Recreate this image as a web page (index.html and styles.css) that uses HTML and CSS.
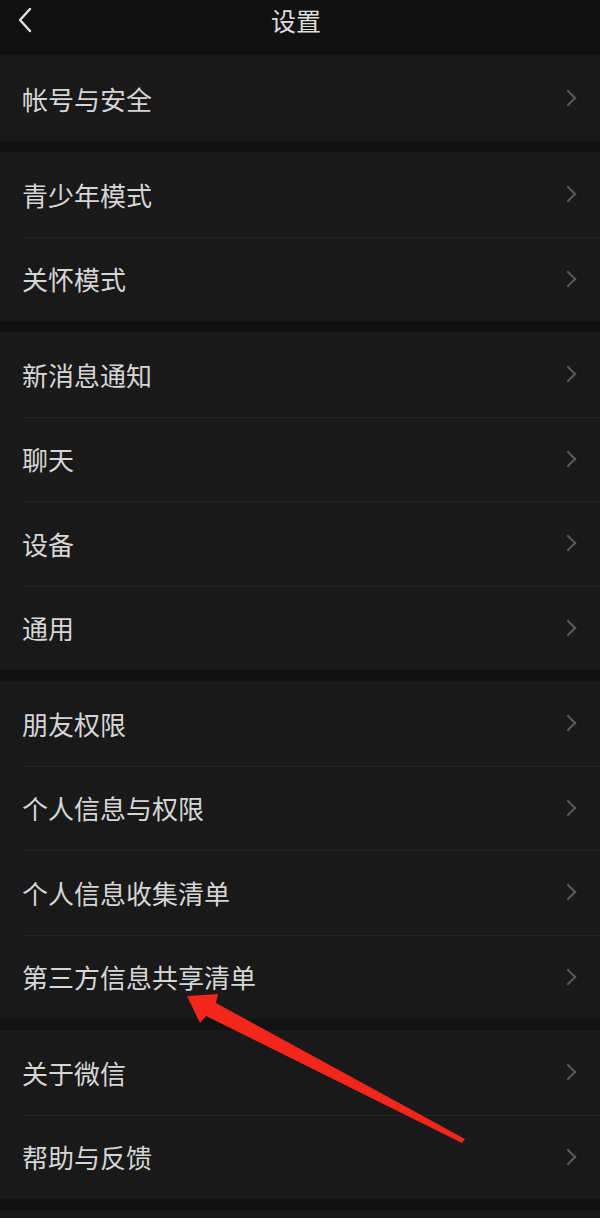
FILE: index.html
```html
<!DOCTYPE html>
<html lang="zh-CN">
<head>
    <meta charset="UTF-8">
    <meta name="viewport" content="width=device-width, initial-scale=1.0">
    <title>设置</title>
    <link rel="stylesheet" href="styles.css">
</head>
<body>
    <div class="screen">
        <div class="header">
            <svg class="back" width="16" height="26" viewBox="0 0 16 26">
                <polyline points="13,2 3,13 13,24" fill="none" stroke="#e2e2e2" stroke-width="2.4" stroke-linecap="round" stroke-linejoin="round"/>
            </svg>
            <div class="title">设置</div>
        </div>

        <div class="group">
            <div class="row first"><span>帐号与安全</span><i class="chev"></i></div>
        </div>

        <div class="group">
            <div class="row"><span>青少年模式</span><i class="chev"></i></div>
            <div class="row"><span>关怀模式</span><i class="chev"></i></div>
        </div>

        <div class="group">
            <div class="row"><span>新消息通知</span><i class="chev"></i></div>
            <div class="row"><span>聊天</span><i class="chev"></i></div>
            <div class="row"><span>设备</span><i class="chev"></i></div>
            <div class="row"><span>通用</span><i class="chev"></i></div>
        </div>

        <div class="group">
            <div class="row"><span>朋友权限</span><i class="chev"></i></div>
            <div class="row"><span>个人信息与权限</span><i class="chev"></i></div>
            <div class="row"><span>个人信息收集清单</span><i class="chev"></i></div>
            <div class="row"><span>第三方信息共享清单</span><i class="chev"></i></div>
        </div>

        <div class="group">
            <div class="row"><span>关于微信</span><i class="chev"></i></div>
            <div class="row"><span>帮助与反馈</span><i class="chev"></i></div>
        </div>

        <div class="group">
            <div class="row"><span></span></div>
        </div>

        <!-- annotation arrow drawn over the list -->
        <svg class="arrow" width="600" height="1218" viewBox="0 0 600 1218">
            <polygon points="187,996 218,994 216,1003 465,1139 462,1143 206,1016 200,1023" fill="#f3261c"/>
        </svg>
    </div>
</body>
</html>
```

FILE: styles.css
```css
* {
    box-sizing: border-box;
}
body {
    margin: 0;
    background-color: #111111;
    font-family: "Noto Sans CJK SC", "Noto Sans", sans-serif;
}
.screen {
    position: relative;
    width: 600px;
    height: 1218px;
    overflow: hidden;
    background-color: #111111;
}
.header {
    height: 55px;
    display: flex;
    justify-content: center;
    align-items: flex-start;
    position: relative;
}
.back {
    position: absolute;
    left: 17px;
    top: 7px;
}
.title {
    color: #dedede;
    font-size: 25px;
    line-height: 40px;
    margin-left: -8px;
}
.group {
    background-color: #191919;
    margin-bottom: 11px;
}
.row {
    height: 84.5px;
    display: flex;
    align-items: center;
    justify-content: space-between;
    padding: 0 26px 0 22px;
    position: relative;
    color: #d6d6d6;
    font-size: 26px;
}
.row.first {
    height: 86px;
}
.row + .row::before {
    content: "";
    position: absolute;
    left: 22px;
    right: 0;
    top: 0;
    height: 1px;
    background-color: #232323;
}
.chev {
    width: 12px;
    height: 12px;
    border-top: 2.5px solid #595959;
    border-right: 2.5px solid #595959;
    transform: rotate(45deg);
}
.arrow {
    position: absolute;
    left: 0;
    top: 0;
    pointer-events: none;
}
```
